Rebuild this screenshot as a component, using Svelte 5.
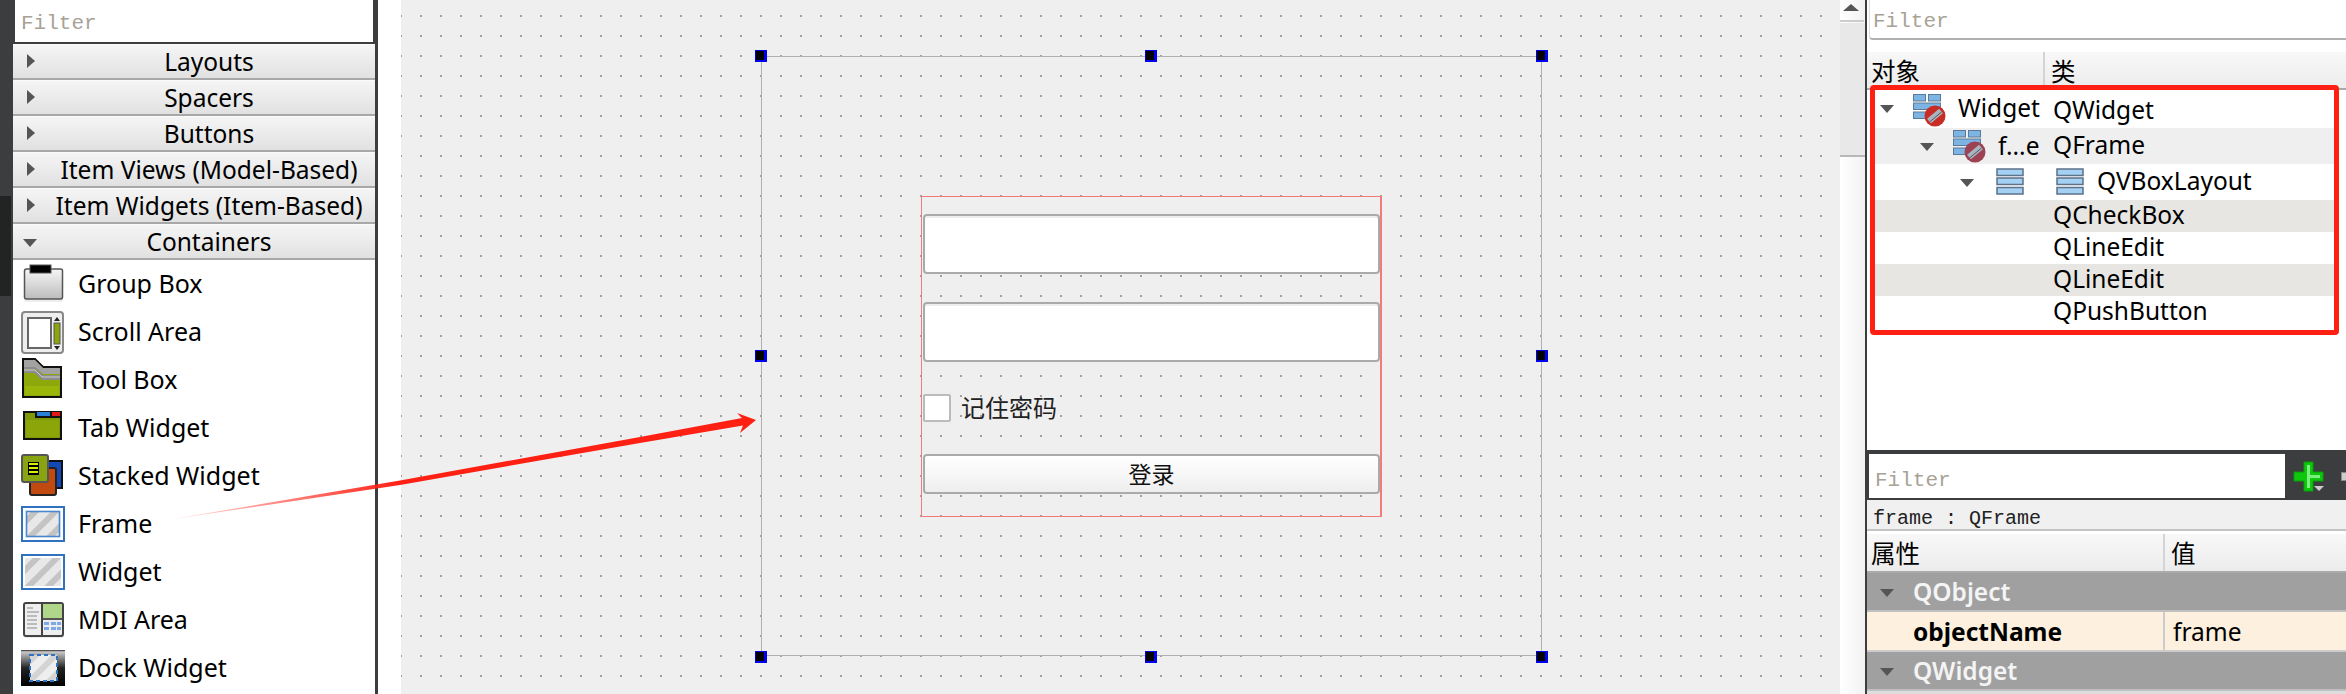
<script>
  const categories = [
    { name: "Layouts" },
    { name: "Spacers" },
    { name: "Buttons" },
    { name: "Item Views (Model-Based)" },
    { name: "Item Widgets (Item-Based)" },
    { name: "Containers", open: true },
  ];
  const widgets = [
    { name: "Group Box", icon: "group" },
    { name: "Scroll Area", icon: "scroll" },
    { name: "Tool Box", icon: "tool" },
    { name: "Tab Widget", icon: "tab" },
    { name: "Stacked Widget", icon: "stacked" },
    { name: "Frame", icon: "frame" },
    { name: "Widget", icon: "widget" },
    { name: "MDI Area", icon: "mdi" },
    { name: "Dock Widget", icon: "dock" },
  ];
  const handles = [
    "tl", "tc", "tr", "ml", "mr", "bl", "bc", "br",
  ];
</script>

{#snippet hatch(id, bg, stripe)}
  <defs>
    <pattern {id} width="14" height="14" patternUnits="userSpaceOnUse" patternTransform="rotate(-45 0 0) translate(0 0)">
      <rect width="14" height="14" fill={bg} />
      <rect width="14" height="6" fill={stripe} />
    </pattern>
  </defs>
{/snippet}

{#snippet paletteIcon(name)}
  <svg class="pal-icon" width="44" height="44" viewBox="0 0 44 44">
    {#if name === "group"}
      <defs>
        <linearGradient id="gb" x1="0" y1="0" x2="0" y2="1">
          <stop offset="0" stop-color="#f6f6f6" /><stop offset="1" stop-color="#bcbcbc" />
        </linearGradient>
      </defs>
      <rect x="3" y="8" width="39" height="32" rx="2" fill="#ddd" opacity=".5" />
      <rect x="3.5" y="7" width="38" height="30" rx="2" fill="url(#gb)" stroke="#555" stroke-width="1.5" />
      <rect x="9" y="3" width="21" height="8" fill="#000" stroke="#555" />
    {:else if name === "scroll"}
      <rect x="1" y="2" width="41" height="41" rx="3" fill="#eee" stroke="#888" stroke-width="2" />
      <rect x="7" y="8" width="23" height="30" fill="#fff" stroke="#666" stroke-width="2" />
      <rect x="33" y="13" width="6" height="21" fill="#8ca50c" stroke="#555" />
      <path d="M33 11l3-4 3 4zM33 36l3 4 3-4z" fill="#222" />
    {:else if name === "tool"}
      <path d="M2 1h12l8 8h18v30H2z" fill="#8da80a" stroke="#111" stroke-width="2" />
      <path d="M3 2h11l8 8h17v6H22l-8-7H3z" fill="#a2a2a2" />
      <path d="M3 9h11l8 8h17v5H21l-8-7H3z" fill="#8c8c8c" />
      <path d="M3 12h11l7 7h18" fill="none" stroke="#ccc" />
      <rect x="4" y="28" width="34" height="9" fill="#a0bc08" opacity=".7" />
    {:else if name === "tab"}
      <rect x="3" y="6" width="37" height="27" fill="#7f9a08" stroke="#111" stroke-width="2" />
      <rect x="14" y="5" width="26" height="7" fill="#111" />
      <rect x="16" y="6" width="13" height="4" fill="#2a82d8" />
      <rect x="31" y="6" width="8" height="4" fill="#e01818" />
      <rect x="5" y="14" width="33" height="17" fill="#8ca60a" />
    {:else if name === "stacked"}
      <rect x="27" y="7" width="14" height="27" fill="#1248b8" stroke="#111" stroke-width="2" />
      <rect x="9" y="14" width="26" height="27" rx="2" fill="#c04a10" stroke="#222" stroke-width="2" />
      <rect x="1" y="1" width="26" height="27" rx="2" fill="#88a410" stroke="#555" stroke-width="2" />
      <rect x="7" y="8" width="11" height="13" fill="#000" />
      <path d="M8 10h9M8 14h9M8 18h9" stroke="#d8f000" stroke-width="2" />
    {:else if name === "frame"}
      {@render hatch("hf", "#e8e8e8", "#c4c4c4")}
      <rect x="1" y="5" width="42" height="34" fill="#fff" stroke="#2f73c0" stroke-width="2" />
      <rect x="5.5" y="9.5" width="33" height="25" fill="url(#hf)" stroke="#4a86cc" stroke-width="1.6" />
    {:else if name === "widget"}
      {@render hatch("hw", "#e8e8e8", "#c4c4c4")}
      <rect x="1" y="5" width="42" height="34" fill="#fff" stroke="#2f73c0" stroke-width="2" />
      <rect x="4" y="8" width="36" height="28" fill="url(#hw)" />
    {:else if name === "mdi"}
      <rect x="3" y="6" width="40" height="34" rx="2" fill="#ccc" opacity=".4" />
      <rect x="3" y="5" width="39" height="33" rx="2" fill="#eee" stroke="#444" stroke-width="2" />
      <path d="M6 10h6M6 14h12M6 18h10M6 22h10M6 26h10M6 30h10" stroke="#aaa" stroke-width="1.5" />
      <rect x="20" y="6" width="21" height="14" fill="#b0d68a" />
      <rect x="20" y="5" width="2" height="32" fill="#444" />
      <rect x="22" y="20" width="19" height="2" fill="#555" />
      <path d="M23 24h5v3h-5zM30 24h5v3h-5zM36 24h4v3h-4zM23 29h5v3h-5zM30 29h5v3h-5zM36 29h4v3h-4z" fill="#7da9e8" />
    {:else if name === "dock"}
      {@render hatch("hd", "#eee", "#d4d4d4")}
      <defs>
        <linearGradient id="dk" x1="0" y1="0" x2="0" y2="1">
          <stop offset="0" stop-color="#222" /><stop offset=".05" stop-color="#c8c8c8" />
          <stop offset=".5" stop-color="#222" /><stop offset="1" stop-color="#000" />
        </linearGradient>
      </defs>
      <rect x="0" y="4" width="44" height="36" fill="url(#dk)" />
      <rect x="9" y="9" width="27" height="26" fill="url(#hd)" stroke="#2f73c0" stroke-width="2" stroke-dasharray="4 3" />
    {/if}
  </svg>
{/snippet}

{#snippet tri(cls)}
  <svg class={cls} width="16" height="10" viewBox="0 0 16 10"><path d="M1 1h14L8 9z" fill="#555" /></svg>
{/snippet}

{#snippet formIcon(dim)}
  <svg class="tree-icon" width="34" height="34" viewBox="0 0 34 34">
    <g fill="#7cb4e4" stroke="#5c7a98">
      <rect x="0.5" y="1.5" width="12" height="6.5" />
      <rect x="15.5" y="1.5" width="12" height="6.5" />
      <rect x="0.5" y="10" width="27" height="6.5" />
      <rect x="0.5" y="19" width="16" height="6.5" />
    </g>
    <circle cx="22" cy="23" r="10.5" fill={dim ? "#9c4252" : "#c82c24"} />
    <path d="M16 28l12-10" stroke="#a8b4c0" stroke-width="6" />
    <path d="M16.5 29l12-10" stroke="#555" stroke-width="1" />
  </svg>
{/snippet}

{#snippet boxIcon()}
  <svg class="tree-icon" width="28" height="28" viewBox="0 0 28 28">
    <g fill="#a4d0f4" stroke="#5c7288" stroke-width="1.5">
      <rect x="1" y="1" width="26" height="6.5" />
      <rect x="1" y="10" width="26" height="6.5" />
      <rect x="1" y="19.5" width="26" height="6.5" />
    </g>
  </svg>
{/snippet}

<div class="app">
  <div class="strip"><div class="strip-dark"></div></div>

  <aside class="palette">
    <div class="filter"><span class="mono">Filter</span></div>
    {#each categories as c}
      <div class="category">
        {#if c.open}
          <svg class="cat-arrow open" width="16" height="10" viewBox="0 0 16 10"><path d="M1 1h14L8 9z" fill="#555" /></svg>
        {:else}
          <svg class="cat-arrow" width="10" height="16" viewBox="0 0 10 16"><path d="M1 1l8 7-8 7z" fill="#555" /></svg>
        {/if}
        {c.name}
      </div>
    {/each}
    <ul class="widget-list">
      {#each widgets as w}
        <li>{@render paletteIcon(w.icon)}<span>{w.name}</span></li>
      {/each}
    </ul>
  </aside>

  <div class="gutter"></div>

  <main class="canvas">
    <div class="form-window">
      {#each handles as h}
        <i class="handle {h}"></i>
      {/each}
      <div class="frame">
        <div class="line-edit"></div>
        <div class="line-edit"></div>
        <div class="check-row"><span class="checkbox"></span><span>记住密码</span></div>
        <div class="push-btn">登录</div>
      </div>
    </div>
  </main>

  <div class="vscroll">
    <div class="up"><svg width="16" height="9" viewBox="0 0 16 9"><path d="M0 8l8-7 8 7z" fill="#555" /></svg></div>
    <div class="thumb"></div>
  </div>

  <aside class="right">
    <div class="obj-filter"><span class="mono">Filter</span></div>
    <div class="head obj-head">
      <span class="c1">对象</span><span class="c2">类</span>
    </div>
    <div class="tree">
      <div class="row r1">
        <span class="cell">{@render tri("t0")}{@render formIcon(false)}<b class="t1">Widget</b></span>
        <span>QWidget</span>
      </div>
      <div class="row r2 band">
        <span class="cell">{@render tri("t0 d1")}{@render formIcon(true)}<b class="t2">f...e</b></span>
        <span>QFrame</span>
      </div>
      <div class="row r3">
        <span class="cell">{@render tri("t0 d2")}{@render boxIcon()}</span>
        <span class="vbox">{@render boxIcon()}<span>QVBoxLayout</span></span>
      </div>
      <div class="row leaf band2"><span>QCheckBox</span></div>
      <div class="row leaf"><span>QLineEdit</span></div>
      <div class="row leaf band2"><span>QLineEdit</span></div>
      <div class="row leaf"><span>QPushButton</span></div>
    </div>
    <div class="tree-space"></div>

    <div class="prop-bar">
      <div class="prop-filter"><span class="mono">Filter</span></div>
      <svg class="plus" width="32" height="32" viewBox="0 0 32 32">
        <path d="M11 1h9v10h10v9H20v10h-9V20H1v-9h10z" fill="#0ec60e" stroke="#06a006" />
        <path d="M14 4h3v10h10v3H17v10h-3z" fill="#7cf07c" />
        <path d="M21 25h10l-5 5z" fill="#ccc" />
      </svg>
      <span class="minus"></span>
    </div>
    <div class="prop-title"><span class="mono small">frame : QFrame</span></div>
    <div class="head prop-head">
      <span class="c1">属性</span><span class="c2">值</span>
    </div>
    <div class="group-row">{@render tri("gt")}QObject</div>
    <div class="prop-row"><b>objectName</b><span>frame</span></div>
    <div class="group-row">{@render tri("gt")}QWidget</div>
    <div class="prop-end"></div>
  </aside>

  <svg class="arrow" width="2346" height="694" viewBox="0 0 2346 694">
    <defs>
      <linearGradient id="fade" gradientUnits="userSpaceOnUse" x1="167" y1="520" x2="400" y2="482">
        <stop offset="0" stop-color="#ff2014" stop-opacity=".1" />
        <stop offset="1" stop-color="#ff2014" />
      </linearGradient>
    </defs>
    <path d="M167 520L400 480.5 640 437 742 418l-5-5 19 7-16 13 3-7.5L640 443 400 485z" fill="url(#fade)" />
  </svg>
  <div class="redbox"></div>
</div>

<style>
  :global(body) {
    margin: 0;
    background: #fff;
  }
  .app {
    position: relative;
    display: flex;
    width: 2346px;
    height: 694px;
    overflow: hidden;
    font-family: "Noto Sans", "Noto Sans CJK SC", sans-serif;
    font-size: 24.5px;
    color: #000;
    background: #fff;
  }
  .mono {
    font-family: "Liberation Mono", "Noto Sans CJK SC", monospace;
    font-size: 21px;
  }
  .mono.small {
    font-size: 20px;
  }

  .strip {
    width: 13px;
    flex: none;
    background: #3c3d3e;
    padding-top: 196px;
    box-sizing: border-box;
  }
  .strip-dark {
    height: 100px;
    background: #222423;
    margin-right: 2px;
  }

  .palette {
    width: 365px;
    flex: none;
    box-sizing: border-box;
    border-right: 3px solid #3c3d3e;
  }
  .filter {
    height: 44px;
    box-sizing: border-box;
    background: #fff;
    border-left: 2px solid #3c3d3e;
    border-right: 2px solid #3c3d3e;
    border-bottom: 2px solid #3c3d3e;
    padding: 5px 0 0 6px;
    line-height: 30px;
    color: #a8a296;
  }
  .category {
    position: relative;
    height: 36px;
    box-sizing: border-box;
    border-bottom: 2px solid #a8a8a8;
    border-top: 1px solid #fafafa;
    background: linear-gradient(#f5f5f5, #e1e1e1);
    text-align: center;
    line-height: 33px;
    padding-left: 30px;
    white-space: nowrap;
  }
  .cat-arrow {
    position: absolute;
    left: 13px;
    top: 8px;
  }
  .cat-arrow.open {
    left: 9px;
    top: 13px;
  }
  .widget-list {
    list-style: none;
    margin: 0;
    padding: 0;
    font-size: 25px;
  }
  .widget-list li {
    display: flex;
    align-items: center;
    height: 48px;
    padding-left: 8px;
  }
  .widget-list li span {
    padding-bottom: 3px;
  }
  .pal-icon {
    flex: none;
    margin-right: 13px;
  }

  .gutter {
    width: 23px;
    flex: none;
  }

  .canvas {
    width: 1439px;
    flex: none;
    box-sizing: border-box;
    padding: 56px 0 0 360px;
    background-color: #efefef;
    background-image: conic-gradient(from 270deg at 2px 2px, #a0a0a0 90deg, #0000 0);
    background-size: 20px 20px;
    background-position: 19px 15px;
  }
  .form-window {
    position: relative;
    width: 781px;
    height: 600px;
    box-sizing: border-box;
    border: 1px solid #b0b0b0;
    padding: 139px 0 0 159px;
  }
  .handle {
    position: absolute;
    width: 12px;
    height: 12px;
    box-sizing: border-box;
    background: #000;
    border: solid #0000f0;
    border-width: 1px 3px 2px 1px;
  }
  .tl, .tc, .tr { top: -7px; }
  .ml, .mr { top: 293px; }
  .bl, .bc, .br { bottom: -8px; }
  .tl, .ml, .bl { left: -7px; }
  .tc, .bc { left: 383px; }
  .tr, .mr, .br { right: -7px; }

  .frame {
    width: 461px;
    height: 321px;
    box-sizing: border-box;
    border: 1px solid #f47a7a;
    border-right-width: 2px;
    padding: 17px 0 0 1px;
    display: flex;
    flex-direction: column;
  }
  .line-edit {
    height: 60px;
    flex: none;
    box-sizing: border-box;
    background: #fff;
    border: 2px solid #aaa;
    border-radius: 4px;
    margin-bottom: 28px;
    box-shadow: inset 0 2px 0 #eee;
  }
  .check-row {
    display: flex;
    align-items: center;
    height: 28px;
    margin-top: 4px;
    color: #222;
    font-size: 24px;
    line-height: 28px;
  }
  .checkbox {
    width: 28px;
    height: 28px;
    box-sizing: border-box;
    background: #fff;
    border: 2px solid #bbb;
    border-radius: 2px;
    margin-right: 10px;
  }
  .push-btn {
    height: 40px;
    margin-top: 32px;
    box-sizing: border-box;
    border: 2px solid #aaa;
    border-radius: 4px;
    background: linear-gradient(#fff, #eeeeee);
    text-align: center;
    line-height: 36px;
    font-size: 23px;
    color: #111;
  }

  .vscroll {
    width: 25px;
    flex: none;
    background: linear-gradient(90deg, #fff, #f2f2f2);
  }
  .up {
    height: 22px;
    display: flex;
    justify-content: center;
    padding-top: 3px;
    box-sizing: border-box;
    border-bottom: 2px solid #ccc;
    margin-right: 1px;
  }
  .up svg { margin-left: -3px; }
  .thumb {
    height: 132px;
    background: #e8e8e8;
    border-bottom: 2px solid #b8b8b8;
    margin-top: 1px;
  }

  .right {
    width: 481px;
    flex: none;
    box-sizing: border-box;
    border-left: 2px solid #3c3d3e;
    display: flex;
    flex-direction: column;
    height: 694px;
  }
  .obj-filter {
    height: 40px;
    box-sizing: border-box;
    margin-left: 2px;
    border-bottom: 2px solid #b0b0b0;
    border-left: 1px solid #ddd;
    border-bottom-left-radius: 4px;
    padding: 3px 0 0 3px;
    line-height: 30px;
    color: #a8a296;
    flex: none;
  }
  .head {
    position: relative;
    display: flex;
    flex: none;
    background: linear-gradient(#f8f8f8, #ececec);
    border-bottom: 2px solid #aaa;
    line-height: 39px;
    font-size: 24.5px;
    box-sizing: border-box;
  }
  .obj-head {
    margin-top: 12px;
    height: 38px;
  }
  .c1 {
    box-sizing: border-box;
    padding-left: 4px;
    border-right: 2px solid #d4d4d4;
  }
  .obj-head .c1 { width: 178px; }
  .prop-head .c1 { width: 298px; }
  .c2 { padding-left: 6px; }

  .tree {
    flex: none;
    margin: 0 10px 0 8px;
  }
  .row {
    display: flex;
    align-items: center;
    white-space: nowrap;
  }
  .row b { font-weight: 400; }
  .r1 { height: 38px; }
  .r2, .r3 { height: 36px; }
  .r2 > span:last-child,
  .r3 .vbox > span {
    padding-bottom: 3px;
  }
  .leaf {
    height: 32px;
    padding-left: 178px;
  }
  .leaf span {
    padding-bottom: 4px;
  }
  .band { background: #efefef; }
  .band2 { background: #e8e6e2; }
  .cell {
    position: relative;
    display: block;
    width: 178px;
    height: 100%;
    flex: none;
  }
  .t0 {
    position: absolute;
    left: 4px;
    top: 14px;
  }
  .t0.d1 { left: 44px; }
  .t0.d2 { left: 84px; }
  .r1 .tree-icon {
    position: absolute;
    left: 38px;
    top: 3px;
  }
  .r2 .tree-icon {
    position: absolute;
    left: 78px;
    top: 1px;
  }
  .r3 .cell .tree-icon {
    position: absolute;
    left: 121px;
    top: 4px;
  }
  .t1, .t2 {
    position: absolute;
    top: 0;
    line-height: 36px;
  }
  .t1 { left: 83px; }
  .t2 { left: 123px; }
  .vbox {
    display: flex;
    align-items: center;
    margin-left: 3px;
    gap: 13px;
  }
  .tree-space { flex: 1; }

  .prop-bar {
    flex: none;
    height: 50px;
    background: #3c3d3e;
    box-sizing: border-box;
    padding: 4px 0 2px 2px;
    display: flex;
    align-items: flex-start;
    overflow: hidden;
  }
  .prop-filter {
    flex: none;
    width: 416px;
    height: 44px;
    background: #fff;
    box-sizing: border-box;
    padding: 8px 0 0 6px;
    line-height: 30px;
    color: #a8a296;
  }
  .plus {
    flex: none;
    margin: 7px 0 0 8px;
  }
  .minus {
    flex: none;
    width: 8px;
    height: 7px;
    background: #ccc;
    margin: 18px 0 0 16px;
    border: 1px solid #888;
  }
  .prop-title {
    flex: none;
    height: 31px;
    box-sizing: border-box;
    background: #f0f0f0;
    border-bottom: 2px solid #c4c4c4;
    padding-left: 6px;
    line-height: 29px;
    color: #222;
  }
  .prop-head {
    height: 39px;
    margin-top: 3px;
  }
  .group-row {
    position: relative;
    flex: none;
    height: 39px;
    box-sizing: border-box;
    background: #a0a0a0;
    border-top: 1px solid #a0a0a0;
    border-bottom: 2px solid #c0c0c0;
    padding-left: 46px;
    line-height: 36px;
    font-weight: 600;
    color: #f4f4f4;
  }
  .gt {
    position: absolute;
    left: 12px;
    top: 14px;
  }
  .prop-row {
    flex: none;
    height: 40px;
    box-sizing: border-box;
    display: flex;
    background: #fdf0de;
    border-bottom: 2px solid #ccc;
    line-height: 39px;
  }
  .prop-row b {
    width: 298px;
    box-sizing: border-box;
    padding-left: 46px;
    border-right: 2px solid #ccc;
  }
  .prop-row span { padding-left: 8px; }
  .prop-end {
    flex: none;
    height: 3px;
    background: #ddd;
  }

  .arrow {
    position: absolute;
    left: 0;
    top: 0;
    pointer-events: none;
  }
  .redbox {
    position: absolute;
    left: 1870px;
    top: 85px;
    width: 469px;
    height: 250px;
    box-sizing: border-box;
    border: 5px solid #ff2014;
    border-radius: 4px;
    pointer-events: none;
  }
</style>
